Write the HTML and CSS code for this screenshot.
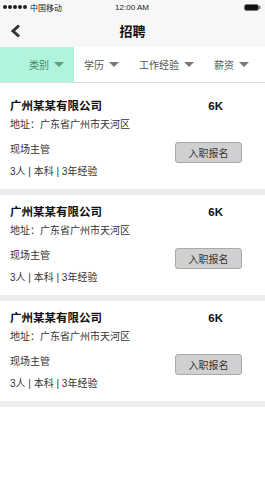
FILE: index.html
```html
<!DOCTYPE html>
<html lang="zh">
<head>
    <meta charset="UTF-8">
    <meta name="viewport" content="width=device-width, initial-scale=1.0">
    <title>招聘</title>
    <link rel="stylesheet" href="styles.css">
</head>
<body>
    <div class="app">
        <div class="top">
            <div class="status">
                <div class="carrier">
                    <span class="dots"><i></i><i></i><i></i><i></i><i></i></span>
                    <span>中国移动</span>
                </div>
                <div class="time">12:00 AM</div>
                <div class="battery">
                    <svg width="17" height="7" viewBox="0 0 17 7">
                        <rect x="0.5" y="0.5" width="14" height="6" rx="2" fill="#111" stroke="#777"/>
                        <rect x="15" y="2" width="1.5" height="3" fill="#777"/>
                    </svg>
                </div>
            </div>
            <div class="nav">
                <svg class="back" width="12" height="14" viewBox="0 0 12 14">
                    <polyline points="9,1.5 3,7 9,12.5" fill="none" stroke="#333" stroke-width="3"/>
                </svg>
                <h1>招聘</h1>
            </div>
        </div>

        <div class="filters">
            <div class="filter active">类别<span class="tri"></span></div>
            <div class="filter">学历<span class="tri"></span></div>
            <div class="filter">工作经验<span class="tri"></span></div>
            <div class="filter">薪资<span class="tri"></span></div>
        </div>

        <div class="list">
            <div class="job">
                <div class="job-head">
                    <span class="company">广州某某有限公司</span>
                    <span class="salary">6K</span>
                </div>
                <div class="address">地址：广东省广州市天河区</div>
                <div class="job-foot">
                    <div>
                        <div class="role">现场主管</div>
                        <div class="meta">3人 | 本科 | 3年经验</div>
                    </div>
                    <button class="apply">入职报名</button>
                </div>
            </div>
            <div class="job">
                <div class="job-head">
                    <span class="company">广州某某有限公司</span>
                    <span class="salary">6K</span>
                </div>
                <div class="address">地址：广东省广州市天河区</div>
                <div class="job-foot">
                    <div>
                        <div class="role">现场主管</div>
                        <div class="meta">3人 | 本科 | 3年经验</div>
                    </div>
                    <button class="apply">入职报名</button>
                </div>
            </div>
            <div class="job">
                <div class="job-head">
                    <span class="company">广州某某有限公司</span>
                    <span class="salary">6K</span>
                </div>
                <div class="address">地址：广东省广州市天河区</div>
                <div class="job-foot">
                    <div>
                        <div class="role">现场主管</div>
                        <div class="meta">3人 | 本科 | 3年经验</div>
                    </div>
                    <button class="apply">入职报名</button>
                </div>
            </div>
        </div>
    </div>
</body>
</html>
```

FILE: styles.css
```css
html,
body {
    margin: 0;
    padding: 0;
    background-color: #fff;
    font-family: "Liberation Sans", "Noto Sans CJK SC", sans-serif;
    color: #333;
}

.app {
    width: 265px;
    min-height: 480px;
}

.top {
    background-color: #f7f7f7;
}

.status {
    height: 14px;
    display: flex;
    align-items: center;
    justify-content: space-between;
    padding: 0 4px 0 3px;
    font-size: 8px;
    color: #222;
}

.carrier {
    display: flex;
    align-items: center;
    gap: 3px;
    width: 90px;
}

.dots {
    display: flex;
    gap: 1px;
}

.dots i {
    width: 4px;
    height: 4px;
    border-radius: 50%;
    background-color: #222;
}

.time {
    font-size: 8px;
}

.battery {
    width: 90px;
    display: flex;
    justify-content: flex-end;
}

.nav {
    height: 33px;
    display: flex;
    align-items: center;
    justify-content: center;
    position: relative;
}

.nav .back {
    position: absolute;
    left: 10px;
    top: 10px;
}

.nav h1 {
    margin: 0;
    font-size: 13px;
    font-weight: bold;
    color: #111;
}

.filters {
    height: 35px;
    display: flex;
    background-color: #fff;
    border-bottom: 1px solid #ddd;
    font-size: 10px;
    color: #555;
}

.filter {
    display: flex;
    align-items: center;
    padding: 0 10px;
}

.filter.active {
    background-color: #b1f3db;
    color: #3c8a69;
    padding-left: 29px;
}

.tri {
    width: 0;
    height: 0;
    margin-left: 5px;
    border-left: 5px solid transparent;
    border-right: 5px solid transparent;
    border-top: 5px solid #777;
}

.filter.active .tri {
    border-top-color: #5d9e83;
}

.list {
    padding-top: 6px;
}

.job {
    height: 100px;
    box-sizing: content-box;
    padding: 0 10px;
    border-bottom: 6px solid #eee;
}

.job-head {
    padding-top: 10px;
    height: 14px;
    line-height: 14px;
    display: flex;
    justify-content: space-between;
}

.company {
    font-size: 11.5px;
    font-weight: bold;
    color: #111;
}

.salary {
    font-size: 11.5px;
    font-weight: bold;
    color: #111;
    margin-right: 32px;
}

.address {
    margin-top: 5px;
    line-height: 14px;
    font-size: 10px;
}

.job-foot {
    margin-top: 11px;
    display: flex;
    justify-content: space-between;
    align-items: flex-start;
}

.role,
.meta {
    font-size: 10px;
    line-height: 14px;
}

.meta {
    margin-top: 8px;
}

.apply {
    margin: -1px 13px 0 0;
    width: 67px;
    height: 21px;
    padding: 0;
    background-color: #d0d0d0;
    border: 1px solid #aaa;
    border-radius: 3px;
    font-family: "Liberation Sans", "Noto Sans CJK SC", sans-serif;
    font-size: 10px;
    color: #333;
}
```
